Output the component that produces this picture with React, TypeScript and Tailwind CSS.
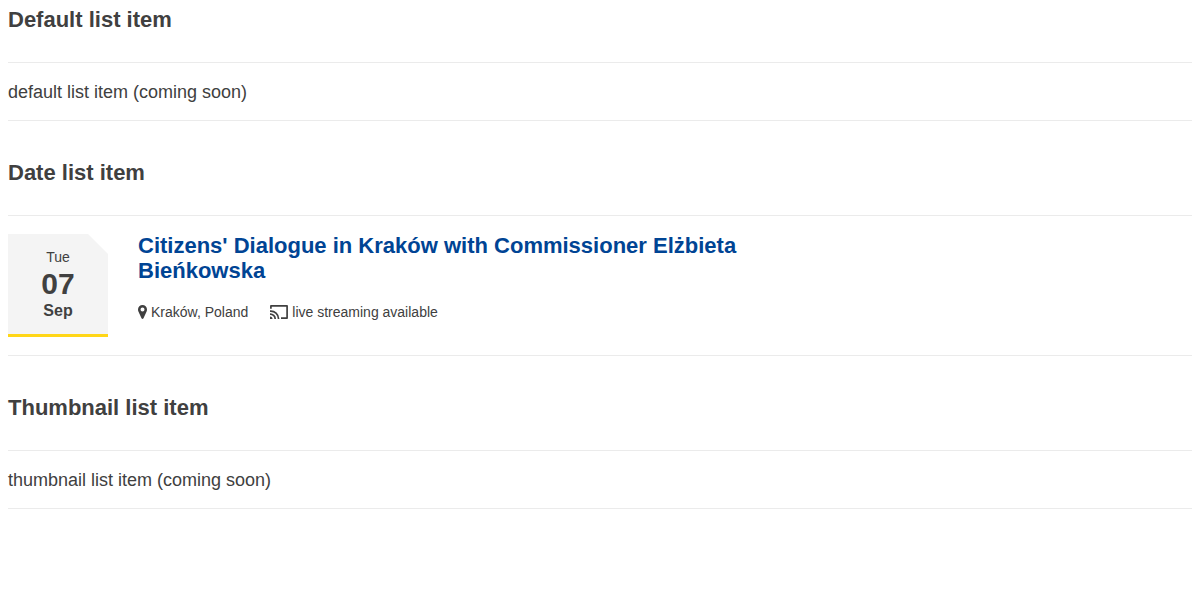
import React from "react";

function Section({ title, children }: { title: string; children: React.ReactNode }) {
  return (
    <section>
      <h2 className="text-[22px] leading-6 font-bold">{title}</h2>
      <div className="mt-[30px] border-y border-[#ebebeb]">{children}</div>
    </section>
  );
}

function PinIcon() {
  return (
    <svg className="h-[14px] w-[9px] shrink-0" viewBox="0 0 9 14" aria-hidden="true">
      <path
        fill="currentColor"
        fillRule="evenodd"
        d="M4.500 0A4.500 4.500 0 0 0 0 4.500C0 5.300.1 5.900.4 6.500L3.500 13.200Q4.500 14.700 5.500 13.200L8.600 6.500C8.900 5.900 9 5.300 9 4.500A4.500 4.500 0 0 0 4.500 0ZM4.500 2.500A2 2 0 1 1 4.500 6.500A2 2 0 0 1 4.500 2.500Z"
      />
    </svg>
  );
}

function CastIcon() {
  return (
    <svg className="h-[14px] w-[18px] shrink-0" viewBox="0 0 18 14" fill="none" stroke="currentColor" aria-hidden="true">
      <path strokeWidth="1.700" strokeLinejoin="round" d="M.9 3.800V.9H17.100V13.100H11" />
      <path strokeWidth="1.700" d="M0 6.100A7.900 7.900 0 0 1 8.600 14M0 9.200A4.900 4.900 0 0 1 5.200 14" />
      <path fill="currentColor" stroke="none" d="M0 11.500A2.500 2.500 0 0 1 2.500 14H0Z" />
    </svg>
  );
}

export default function App() {
  return (
    <main className="flex flex-col gap-10 px-2 pt-2 font-['Liberation_Sans',Arial,sans-serif] text-[#404040]">
      <Section title="Default list item">
        <p className="pt-[17px] pb-[15px] text-lg leading-[25px]">default list item (coming soon)</p>
      </Section>
      <Section title="Date list item">
        <article className="flex gap-[30px] py-[18px]">
          <time
            dateTime="09-07"
            className="flex h-[103px] w-[100px] shrink-0 flex-col items-center border-b-[3px] border-[#ffd617] bg-[#f4f4f4] pt-3 [clip-path:polygon(0_0,80px_0,100%_20px,100%_100%,0_100%)]"
          >
            <span className="text-sm leading-[22px]">Tue</span>
            <span className="text-[30px] leading-8 font-bold">07</span>
            <span className="text-base leading-[22px] font-bold">Sep</span>
          </time>
          <div className="-mt-px min-w-0">
            <h3 className="max-w-[640px] text-[22px] leading-[25px] font-bold text-[#004494]">
              <a href="#event">Citizens' Dialogue in Kraków with Commissioner Elżbieta Bieńkowska</a>
            </h3>
            <ul className="mt-[19px] flex flex-wrap gap-x-[22px] text-sm leading-5">
              <li className="flex items-center gap-1">
                <PinIcon />
                Kraków, Poland
              </li>
              <li className="flex items-center gap-1">
                <CastIcon />
                live streaming available
              </li>
            </ul>
          </div>
        </article>
      </Section>
      <Section title="Thumbnail list item">
        <p className="pt-[17px] pb-[15px] text-lg leading-[25px]">thumbnail list item (coming soon)</p>
      </Section>
    </main>
  );
}
